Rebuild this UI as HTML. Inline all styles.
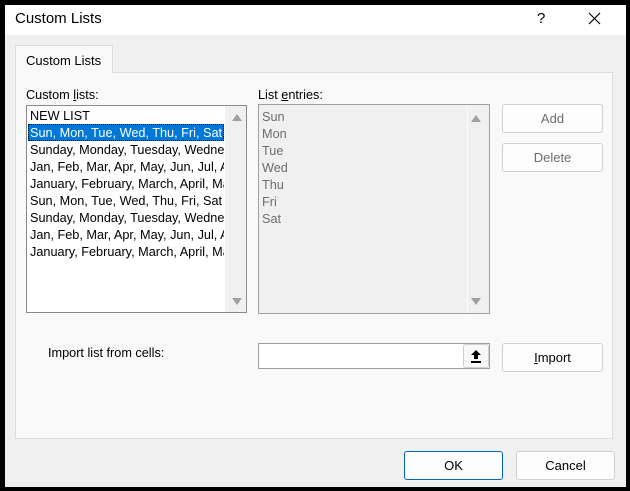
<!DOCTYPE html>
<html><head><style>
*{margin:0;padding:0;box-sizing:border-box}
body{width:630px;height:491px;background:#000;position:relative;overflow:hidden;font-family:"Liberation Sans",sans-serif;font-size:12px;color:#000}
.a{position:absolute}
.win{left:5px;top:5px;width:621px;height:482px;background:#f0f0f0}
.title{left:0;top:0;width:621px;height:30px;background:#fff}
.btn{position:absolute;background:#fdfdfd;border:1px solid #d0d0d0;border-radius:3px;text-align:center;font-size:13px}
.row{position:absolute;left:3px;height:17px;line-height:17px;white-space:nowrap;font-size:12.7px}
.ent{position:absolute;left:3px;height:17px;line-height:17px;color:#6d6d6d;font-size:12.7px}
.tri{position:absolute;width:0;height:0;border-left:5px solid transparent;border-right:5px solid transparent}
</style></head><body>
<div class="a win">
 <div class="a title"></div>
 <div class="a" style="left:10px;top:5px;font-size:15px">Custom Lists</div>
 <div class="a" style="left:532px;top:5px;font-size:15px">?</div>
 <svg class="a" style="left:583px;top:7px" width="13" height="13"><path d="M1 1L12 12M12 1L1 12" stroke="#000" stroke-width="1.2"/></svg>
 <div class="a" style="left:10px;top:67px;width:598px;height:367px;background:#f9f9f9;border:1px solid #dcdcdc"></div>
 <div class="a" style="left:10px;top:40px;width:98px;height:28px;background:#f9f9f9;border:1px solid #dcdcdc;border-bottom:none"></div>
 <div class="a" style="left:21px;top:48px;font-size:13px">Custom Lists</div>
 <div class="a" style="left:21px;top:83px;font-size:12.7px">Custom <u>l</u>ists:</div>
 <div class="a" style="left:253px;top:83px;font-size:12.7px">List <u>e</u>ntries:</div>
 <div class="a" style="left:21px;top:100px;width:221px;height:208px;background:#fff;border:1px solid #8a8a8a;overflow:hidden">
  <div class="a" style="left:198px;top:0;width:21px;height:206px;background:#f0f0f0"></div>
  <div class="tri" style="left:205px;top:8px;border-bottom:7px solid #a0a0a0"></div>
  <div class="tri" style="left:205px;top:192px;border-top:7px solid #a0a0a0"></div>
  <div class="a" style="left:1px;top:18px;width:196px;height:17px;background:#0078d7;outline:1px dotted #000;outline-offset:-1px"></div>
  <div class="row" style="top:2px">NEW LIST</div>
  <div class="row" style="top:19px;color:#fff;width:194px;overflow:hidden">Sun, Mon, Tue, Wed, Thu, Fri, Sat</div>
  <div class="row" style="top:36px;width:194px;overflow:hidden">Sunday, Monday, Tuesday, Wednesday</div>
  <div class="row" style="top:53px;width:194px;overflow:hidden">Jan, Feb, Mar, Apr, May, Jun, Jul, Aug</div>
  <div class="row" style="top:70px;width:194px;overflow:hidden">January, February, March, April, May</div>
  <div class="row" style="top:87px;width:194px;overflow:hidden">Sun, Mon, Tue, Wed, Thu, Fri, Sat</div>
  <div class="row" style="top:104px;width:194px;overflow:hidden">Sunday, Monday, Tuesday, Wednesday</div>
  <div class="row" style="top:121px;width:194px;overflow:hidden">Jan, Feb, Mar, Apr, May, Jun, Jul, Aug</div>
  <div class="row" style="top:138px;width:194px;overflow:hidden">January, February, March, April, May</div>
 </div>
 <div class="a" style="left:253px;top:99px;width:232px;height:210px;background:#f0f0f0;border:1px solid #a0a0a0;overflow:hidden">
  <div class="a" style="left:208px;top:0;width:1px;height:208px;background:#fafafa"></div>
  <div class="tri" style="left:212px;top:10px;border-bottom:7px solid #a0a0a0"></div>
  <div class="tri" style="left:212px;top:193px;border-top:7px solid #a0a0a0"></div>
  <div class="ent" style="top:4px">Sun</div>
  <div class="ent" style="top:21px">Mon</div>
  <div class="ent" style="top:38px">Tue</div>
  <div class="ent" style="top:55px">Wed</div>
  <div class="ent" style="top:72px">Thu</div>
  <div class="ent" style="top:89px">Fri</div>
  <div class="ent" style="top:106px">Sat</div>
 </div>
 <div class="btn" style="left:497px;top:99px;width:101px;height:29px;line-height:28px;color:#6d6d6d">Add</div>
 <div class="btn" style="left:497px;top:138px;width:101px;height:29px;line-height:28px;color:#6d6d6d">Delete</div>
 <div class="a" style="left:43px;top:341px;font-size:12.7px">Import list from cells:</div>
 <div class="a" style="left:253px;top:338px;width:232px;height:26px;background:#fff;border:1px solid #a0a0a0"></div>
 <div class="a" style="left:458px;top:339px;width:26px;height:24px;background:#f9f9f9;border:1px solid #cfcfcf;border-radius:3px"></div>
 <svg class="a" style="left:465px;top:344px" width="12" height="14"><path d="M6 1L1 6H4V10H8V6H11Z" fill="#000"/><rect x="1" y="12" width="10" height="2" fill="#000"/></svg>
 <div class="btn" style="left:497px;top:338px;width:101px;height:29px;line-height:28px"><u>I</u>mport</div>
 <div class="btn" style="left:399px;top:446px;width:99px;height:29px;line-height:28px;border-color:#0067c0">OK</div>
 <div class="btn" style="left:511px;top:446px;width:99px;height:29px;line-height:28px">Cancel</div>
</div>
</body></html>
